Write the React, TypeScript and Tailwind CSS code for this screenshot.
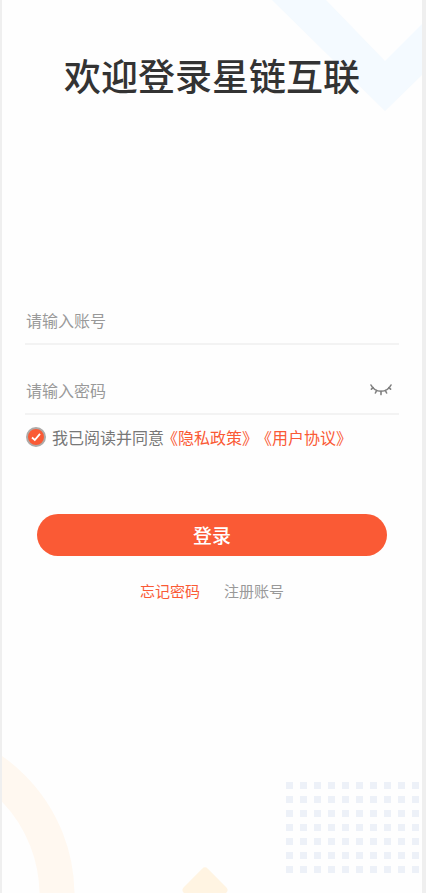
import { useState } from "react";

function Backdrop() {
  return (
    <div aria-hidden="true" className="pointer-events-none absolute inset-0 -z-10 overflow-hidden">
      <svg className="absolute top-0 right-0" width="150" height="112" viewBox="0 0 150 112">
        <path d="M0 0H54L113 61L150 24V75L113 111Z" fill="#f4faff" />
      </svg>
      <svg className="absolute bottom-0 left-0" width="240" height="150" viewBox="0 0 240 150">
        <circle cx="-97" cy="152" r="152" fill="none" stroke="#fff8f0" strokeWidth="35" />
        <rect x="186" y="130" width="34" height="34" rx="4" transform="rotate(45 203 147)" fill="#fff4e2" />
      </svg>
      <svg className="absolute right-0 bottom-4" width="136" height="95" viewBox="0 0 136 95">
        <defs>
          <pattern id="dots" width="14" height="14" patternUnits="userSpaceOnUse">
            <rect width="7" height="7" fill="#edf1f8" />
          </pattern>
        </defs>
        <rect width="136" height="95" fill="url(#dots)" />
      </svg>
    </div>
  );
}

function ClosedEye() {
  return (
    <svg width="22" height="12" viewBox="0 0 22 12" fill="none" stroke="#808080" strokeWidth="1.6" strokeLinecap="round">
      <path d="M1 1C5 9.3 17 9.3 21 1" />
      <path d="M3.200 3.600L1.400 5.200M6.600 6.500L5.400 9M11 7.300V10.600M15.400 6.500L16.600 9M18.800 3.600L20.600 5.200" />
    </svg>
  );
}

const fieldClass =
  "h-8 min-w-0 flex-1 bg-transparent text-base text-[#555555] outline-none placeholder:text-[#999999]";

export default function App() {
  const [visible, setVisible] = useState(false);
  const [agreed, setAgreed] = useState(true);

  return (
    <div className="min-h-screen border-r-4 border-l-2 border-[#efefef] bg-[#fefefe] font-['Noto_Sans_CJK_SC',sans-serif]">
      <main className="relative isolate min-h-screen px-[23px] pt-12">
        <Backdrop />
        <h1 className="text-center text-[37px] leading-[54px] font-medium text-[#333333]">欢迎登录星链互联</h1>

        <form className="mt-[202px] flex flex-col" onSubmit={(e) => e.preventDefault()}>
          <div className="flex h-[41px] items-start border-b-2 border-[#f3f3f3] pl-px">
            <input aria-label="账号" type="text" placeholder="请输入账号" className={fieldClass} />
          </div>
          <div className="mt-[29px] flex h-[41px] items-start border-b-2 border-[#f3f3f3] pl-px">
            <input
              aria-label="密码"
              type={visible ? "text" : "password"}
              placeholder="请输入密码"
              className={fieldClass}
            />
            <button
              type="button"
              aria-label="显示密码"
              onClick={() => setVisible(!visible)}
              className="mr-[7px] flex h-8 items-center"
            >
              <ClosedEye />
            </button>
          </div>

          <div className="mt-2.5 flex h-6 items-center text-base whitespace-nowrap text-[#777777] [text-spacing-trim:space-all]">
            <span className="ml-px grid size-5 shrink-0 place-items-center">
              <input
                id="agree"
                type="checkbox"
                checked={agreed}
                onChange={(e) => setAgreed(e.target.checked)}
                className="col-start-1 row-start-1 size-5 appearance-none rounded-full border-2 border-[#aeaaa8] checked:bg-[#fa5a35]"
              />
              {agreed && (
                <svg
                  className="pointer-events-none col-start-1 row-start-1"
                  width="10"
                  height="10"
                  viewBox="0 0 10 10"
                  fill="none"
                  stroke="white"
                  strokeWidth="1.8"
                >
                  <path d="M1 5.500L3.800 8L9 1.800" />
                </svg>
              )}
            </span>
            <label htmlFor="agree" className="ml-1.5">
              我已阅读并同意
            </label>
            <a href="#privacy" className="-ml-0.5 text-[#fa5a35]">
              《隐私政策》
            </a>
            <a href="#terms" className="-ml-0.5 text-[#fa5a35]">
              《用户协议》
            </a>
          </div>

          <button
            type="submit"
            className="mx-3 mt-[65px] h-[42px] rounded-full bg-[#fa5a35] text-[19px] font-medium text-white"
          >
            登录
          </button>
        </form>

        <nav className="mt-[23px] flex justify-center gap-6 text-[15px] leading-6">
          <a href="#forgot" className="text-[#fa5a35]">
            忘记密码
          </a>
          <a href="#register" className="text-[#999999]">
            注册账号
          </a>
        </nav>
      </main>
    </div>
  );
}
